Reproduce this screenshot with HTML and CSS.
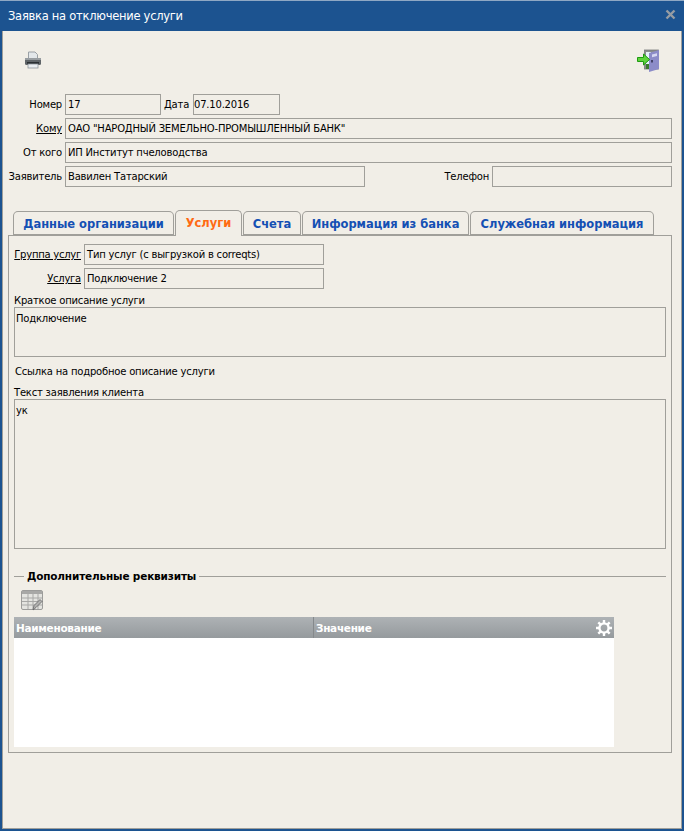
FILE: index.html
```html
<!DOCTYPE html>
<html>
    <head>
        <meta charset="utf-8">
        <title>Заявка на отключение услуги</title>
        <link rel="stylesheet" href="styles.css">
    </head>
    <body>
        <div class="window">
            <div class="titlebar">
                <span class="title">Заявка на отключение услуги</span>
                <svg class="close" width="11" height="11" viewBox="0 0 11 11"><path d="M1.5 1.5 L9.5 9.5 M9.5 1.5 L1.5 9.5" stroke="#969ca3" stroke-width="2.4"/></svg>
            </div>
            <div class="content">
                <div class="toolbar">
                    <svg class="print" width="18" height="18" viewBox="0 0 18 18">
                        <path d="M4.5 1 H11 L13.5 3.5 V8 H4.5 Z" fill="#e3e7ea" stroke="#9aa0a5"/>
                        <rect x="1" y="7" width="16" height="7" rx="1.5" fill="#5f6468"/>
                        <rect x="1" y="7" width="16" height="2" fill="#989da1"/>
                        <rect x="3" y="11" width="12" height="2" fill="#2b2f33"/>
                        <rect x="4" y="13" width="10" height="4" fill="#e9edf0" stroke="#8e959b" stroke-width=".8"/>
                    </svg>
                    <svg class="door" width="23" height="23" viewBox="0 0 23 23">
                        <rect x="7.5" y="1" width="14" height="19" fill="#8a8d8c" stroke="#77797a" stroke-width=".8"/>
                        <rect x="9" y="3" width="5" height="15" fill="#e6f2fb"/>
                        <path d="M12 4 L22 1 V20 L12 23 Z" fill="#8c8cc8"/>
                        <path d="M15 5.5 L20 4.2 V7 L15 8.2 Z" fill="#d6d8f2"/>
                        <rect x="14" y="11" width="2" height="2.5" fill="#44446a"/>
                        <rect x="9" y="15" width="3" height="5" fill="#3a7a2e"/>
                        <path d="M.5 8.5 H6.5 V5 L12.5 10.5 L6.5 16 V12.5 H.5 Z" fill="#5fd33c" stroke="#1f9a12"/>
                    </svg>
                </div>

                <div class="row">
                    <label class="label">Номер</label>
                    <div class="field field-number">17</div>
                    <label class="label-date">Дата</label>
                    <div class="field field-date">07.10.2016</div>
                </div>
                <div class="row">
                    <label class="label link">Кому</label>
                    <div class="field field-wide">ОАО "НАРОДНЫЙ ЗЕМЕЛЬНО-ПРОМЫШЛЕННЫЙ БАНК"</div>
                </div>
                <div class="row">
                    <label class="label">От кого</label>
                    <div class="field field-wide">ИП Институт пчеловодства</div>
                </div>
                <div class="row">
                    <label class="label">Заявитель</label>
                    <div class="field field-person">Вавилен Татарский</div>
                    <label class="label-phone">Телефон</label>
                    <div class="field field-phone"></div>
                </div>

                <div class="tabs">
                    <div class="tab tab-org">Данные организации</div>
                    <div class="tab tab-active">Услуги</div>
                    <div class="tab tab-acc">Счета</div>
                    <div class="tab tab-bank">Информация из банка</div>
                    <div class="tab tab-serv">Служебная информация</div>
                </div>

                <div class="panel">
                    <div class="row">
                        <label class="label-panel link">Группа услуг</label>
                        <div class="field field-service">Тип услуг (с выгрузкой в correqts)</div>
                    </div>
                    <div class="row">
                        <label class="label-panel link">Услуга</label>
                        <div class="field field-service">Подключение 2</div>
                    </div>
                    <div class="caption">Краткое описание услуги</div>
                    <div class="area area-short">Подключение</div>
                    <div class="caption caption-link">Ссылка на подробное описание услуги</div>
                    <div class="caption">Текст заявления клиента</div>
                    <div class="area area-long">ук</div>

                    <div class="group-head">
                        <span class="group-line group-line-left"></span>
                        <span class="group-title">Дополнительные реквизиты</span>
                        <span class="group-line"></span>
                    </div>

                    <svg class="table-icon" width="22" height="21" viewBox="0 0 22 21">
                        <rect x=".5" y=".5" width="21" height="19" rx="1.5" fill="#e4e4e0" stroke="#9c9c9a"/>
                        <rect x="1" y="1" width="20" height="3" fill="#a8a8a6"/>
                        <path d="M1 8 H21 M1 11.5 H21 M1 15 H21 M7 4 V19 M12 4 V19 M17 4 V19" stroke="#a8a8a6" fill="none"/>
                        <path d="M12 20 L13 15.5 L19 9.5 L21 11.5 L15 17.5 Z" fill="#b0b0ae" stroke="#626265" stroke-width=".8"/>
                    </svg>

                    <div class="grid">
                        <div class="grid-head">
                            <div class="grid-col grid-col-name">Наименование</div>
                            <div class="grid-col grid-col-value">Значение</div>
                            <svg class="gear" width="16" height="16" viewBox="0 0 16 16">
                                <circle cx="8" cy="8" r="4.6" fill="none" stroke="#fff" stroke-width="2.4"/>
                                <path d="M8 0 V3 M8 13 V16 M0 8 H3 M13 8 H16 M2.3 2.3 L4.4 4.4 M11.6 11.6 L13.7 13.7 M13.7 2.3 L11.6 4.4 M4.4 11.6 L2.3 13.7" stroke="#fff" stroke-width="2.4"/>
                            </svg>
                        </div>
                    </div>
                </div>
            </div>
        </div>
    </body>
</html>
```
FILE: styles.css
```css
html, body {
    margin: 0;
    padding: 0;
}
body {
    background-color: #1c5390;
    font-family: "DejaVu Sans", sans-serif;
    font-size: 10px;
    letter-spacing: -0.2px;
    color: #000;
}

.window {
    width: 684px;
    height: 831px;
    display: flex;
    flex-direction: column;
    box-sizing: border-box;
    border-top: 1px solid #8fa8c4;
}
.titlebar {
    height: 30px;
    display: flex;
    align-items: center;
    justify-content: space-between;
    padding: 0 8px 0 8px;
    color: #fff;
    font-size: 11.5px;
    letter-spacing: -0.27px;
    flex: none;
}
.close {
    margin-bottom: 4px;
}

.content {
    flex: 1;
    margin: 0 2px 2px 2px;
    padding-bottom: 0;
    background-color: #f1eee7;
    border: 1px solid #a09f9a;
    border-top: none;
}

.toolbar {
    height: 63px;
    box-sizing: border-box;
    display: flex;
    justify-content: space-between;
    padding: 18px 21px 0 21px;
}
.print {
    margin-top: 2px;
}

.row {
    display: flex;
    height: 21px;
    margin-bottom: 3px;
    align-items: center;
}
.label {
    width: 59px;
    text-align: right;
    margin-right: 3px;
    white-space: nowrap;
}
.label-date {
    width: 29px;
    margin: 0 0 0 3px;
}
.label-phone {
    margin-left: 79px;
    width: 45px;
    margin-right: 3px;
    text-align: right;
}
.label-panel {
    width: 67px;
    text-align: right;
    margin-right: 3px;
    white-space: nowrap;
    padding-right: 0;
    letter-spacing: -0.25px;
}
.link {
    text-decoration: underline;
}

.field {
    height: 21px;
    line-height: 20px;
    box-sizing: border-box;
    border: 1px solid #a09f9a;
    padding-left: 2px;
    white-space: nowrap;
}
.field-number {
    width: 96px;
}
.field-date {
    width: 87px;
    padding-left: 0;
}
.field-wide {
    width: 607px;
}
.field-person {
    width: 300px;
}
.field-phone {
    width: 180px;
}
.field-service {
    width: 240px;
}

.tabs {
    display: flex;
    align-items: flex-end;
    height: 26px;
    margin: 23px 0 -1px 10px;
    position: relative;
    z-index: 1;
}
.tab {
    height: 25px;
    box-sizing: border-box;
    line-height: 24px;
    text-align: center;
    font-weight: bold;
    font-size: 11.5px;
    letter-spacing: -0.03px;
    color: #1450b4;
    border: 1px solid #a09f9a;
    border-bottom-width: 2px;
    border-radius: 5px 5px 0 0;
    margin-right: 1px;
    white-space: nowrap;
}
.tab-org {
    width: 161px;
}
.tab-active {
    width: 67px;
    height: 26px;
    color: #ff6a13;
    border-bottom: none;
    background-color: #f1eee7;
}
.tab-acc {
    width: 58px;
}
.tab-bank {
    width: 167px;
}
.tab-serv {
    width: 184px;
}

.panel {
    margin-left: 5px;
    width: 664px;
    box-sizing: border-box;
    border: 1px solid #a09f9a;
    padding: 8px 5px 5px;
}
.caption {
    height: 14px;
    line-height: 16px;
    white-space: nowrap;
}
.row + .caption {
    margin-top: 4px;
}
.caption-link {
    margin: 7px 0 7px 1px;
}
.area {
    width: 652px;
    box-sizing: border-box;
    border: 1px solid #a09f9a;
    padding: 5px 1px;
}
.area-short {
    height: 50px;
}
.area-long {
    height: 150px;
}

.group-head {
    display: flex;
    align-items: center;
    height: 14px;
    margin-top: 20px;
}
.group-line {
    flex: 1;
    height: 1px;
    background-color: #a09f9a;
}
.group-line-left {
    flex: none;
    width: 10px;
}
.group-title {
    font-weight: bold;
    font-size: 10.5px;
    letter-spacing: -0.17px;
    margin: 0 3px;
}

.table-icon {
    display: block;
    margin: 7px 0 6px 7px;
}

.grid {
    width: 600px;
    height: 130px;
    background-color: #fff;
}
.grid-head {
    height: 21px;
    display: flex;
    align-items: center;
    background: linear-gradient(#aeb2b5, #959a9d);
    color: #fff;
    font-weight: bold;
    font-size: 10.5px;
    letter-spacing: -0.3px;
}
.grid-col {
    height: 21px;
    line-height: 22px;
    box-sizing: border-box;
    padding-left: 2px;
}
.grid-col-name {
    width: 300px;
    border-right: 1px solid #85898c;
}
.grid-col-value {
    flex: 1;
}
.gear {
    margin-right: 2px;
}
```
